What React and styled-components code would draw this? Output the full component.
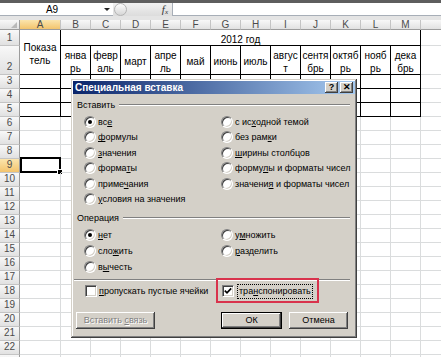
import styled, { createGlobalStyle, css } from 'styled-components';

const GlobalStyle = createGlobalStyle`
  html, body {
    margin: 0;
    padding: 0;
    background: #fff;
    overflow: hidden;
  }
  body {
    font-family: "Liberation Sans", Arial, sans-serif;
    color: #000;
  }
`;

const Screen = styled.div`
  width: 441px;
  height: 357px;
  position: relative;
  overflow: hidden;
  background: #fff;
`;

/* ---------- formula bar ---------- */

const FormulaBar = styled.div`
  display: flex;
  height: 13px;
  border-top: 3px solid #5e5e5e;
  border-bottom: 4px solid #e4e4e4;
  background: #e9e9e9;
`;

const NameBox = styled.div`
  width: 113px;
  box-sizing: border-box;
  background: #fff;
  border-bottom: 1px solid #a7aeb7;
  display: flex;
  align-items: center;
  font-size: 10px;
`;

const NameText = styled.span`
  width: 104px;
  text-align: center;
`;

const DropArrow = styled.span`
  width: 0;
  height: 0;
  border-left: 3px solid transparent;
  border-right: 3px solid transparent;
  border-top: 3px solid #222;
`;

const FxZone = styled.div`
  width: 59px;
  display: flex;
  align-items: center;
  background: linear-gradient(#f1f1f1, #dcdcdc);
`;

const Knob = styled.span`
  width: 11px;
  height: 11px;
  margin-left: 1px;
  border-radius: 50%;
  border: 1px solid #b3b3b3;
  background: linear-gradient(#fdfdfd, #d6d6d6);
`;

const Fx = styled.span`
  margin-left: auto;
  margin-right: 4px;
  font-family: "Liberation Serif", serif;
  font-style: italic;
  font-size: 11px;
  color: #333;

  sub {
    font-size: 7px;
    vertical-align: -1px;
  }
`;

const FormulaInput = styled.div`
  flex: 1;
  background: #fff;
  border-left: 1px solid #a7aeb7;
  border-bottom: 1px solid #a7aeb7;
`;

/* ---------- sheet ---------- */

const Sheet = styled.div`
  display: grid;
  grid-template-columns: 20px 41px repeat(12, 30px) 64px;
  grid-template-rows: 10px 16px 29px repeat(21, 14px);
  font-size: 10px;
`;

const headBg = (active) =>
  active ? 'linear-gradient(#fbe5ad, #f3c46d)' : 'linear-gradient(#f8f8f8, #e1e1e1)';

const Corner = styled.div`
  box-sizing: border-box;
  background: ${headBg(false)};
  border-right: 1px solid #9c9c9c;
  border-bottom: 1px solid #9c9c9c;
  display: flex;
  align-items: flex-end;
  justify-content: flex-end;
  padding: 0 2px 1px 0;

  &::after {
    content: '';
    width: 0;
    height: 0;
    border-left: 6px solid transparent;
    border-bottom: 6px solid #b9b9b9;
  }
`;

const ColHead = styled.div`
  box-sizing: border-box;
  display: flex;
  align-items: center;
  justify-content: center;
  background: ${(p) => headBg(p.$active)};
  border-right: 1px solid #c4c4c4;
  border-bottom: 1px solid #9c9c9c;
  color: #4b4b4b;
  font-size: 10px;
`;

const RowHead = styled.div`
  box-sizing: border-box;
  display: flex;
  align-items: flex-end;
  justify-content: center;
  padding-bottom: 1px;
  line-height: 12px;
  background: ${(p) => headBg(p.$active)};
  border-right: 1px solid #9c9c9c;
  border-bottom: 1px solid #c4c4c4;
  color: #4b4b4b;
  font-size: 10px;
`;

const Cell = styled.div`
  box-sizing: border-box;
  position: relative;
  display: flex;
  align-items: center;
  justify-content: center;
  text-align: center;
  padding-top: 3px;
  line-height: 13px;
  border-right: 1px solid ${(p) => (p.$table ? '#000' : '#dadcdd')};
  border-bottom: 1px solid ${(p) => (p.$table ? '#000' : '#dadcdd')};
  grid-column: ${(p) => (p.$colSpan ? `span ${p.$colSpan}` : 'auto')};
  grid-row: ${(p) => (p.$rowSpan ? `span ${p.$rowSpan}` : 'auto')};

  ${(p) =>
    p.$selected &&
    css`
      &::before {
        content: '';
        position: absolute;
        left: 0;
        top: -2px;
        right: -1px;
        bottom: -1px;
        border: 2px solid #000;
      }
      &::after {
        content: '';
        position: absolute;
        right: -3px;
        bottom: -3px;
        width: 4px;
        height: 4px;
        background: #000;
        border: 1px solid #fff;
      }
    `}
`;

/* ---------- dialog ---------- */

const Dialog = styled.div`
  position: absolute;
  left: 71px;
  top: 79px;
  width: 286px;
  height: 259px;
  box-sizing: border-box;
  padding: 2px;
  background: #d4d0c8;
  box-shadow: inset -1px -1px #404040, inset 1px 1px #d4d0c8, inset -2px -2px #808080,
    inset 2px 2px #fff;
  font-size: 9px;
  display: flex;
  flex-direction: column;
`;

const TitleBar = styled.div`
  height: 13px;
  display: flex;
  align-items: center;
  gap: 2px;
  padding: 0 2px 0 2px;
  background: linear-gradient(90deg, #0a246a, #a6caf0);
  color: #fff;
  font-weight: bold;
  font-size: 10px;
`;

const Title = styled.span`
  flex: 1;
  white-space: nowrap;
`;

const CaptionButton = styled.span`
  width: 13px;
  height: 11px;
  box-sizing: border-box;
  display: flex;
  align-items: center;
  justify-content: center;
  background: #d4d0c8;
  color: #000;
  font-size: 9px;
  font-weight: bold;
  line-height: 1;
  box-shadow: inset -1px -1px #404040, inset 1px 1px #fff, inset -2px -2px #808080;
`;

const GroupHead = styled.div`
  display: flex;
  align-items: center;
  height: 12px;
  margin: ${(p) => p.$mt}px 5px 0 4px;

  &::after {
    content: '';
    flex: 1;
    margin-left: 4px;
    border-top: 1px solid #808080;
    border-bottom: 1px solid #fff;
  }
`;

const OptionGrid = styled.div`
  display: grid;
  grid-template-columns: 137px 1fr;
  grid-auto-flow: column;
  grid-template-rows: repeat(${(p) => p.$rows}, ${(p) => p.$rowH}px);
  padding-left: 11px;
  margin-top: ${(p) => p.$mt}px;
`;

const Option = styled.label`
  display: flex;
  align-items: center;
  gap: 2px;
  white-space: nowrap;
`;

const RadioMark = styled.span`
  flex: none;
  position: relative;
  width: 12px;
  height: 12px;
  box-sizing: border-box;
  border-radius: 50%;
  background: #fff;
  border: 1px solid;
  border-color: #808080 #fff #fff #808080;
  box-shadow: inset 1px 1px #404040, inset -1px -1px #d4d0c8;

  ${(p) =>
    p.$checked &&
    css`
      &::after {
        content: '';
        position: absolute;
        left: 3px;
        top: 3px;
        width: 4px;
        height: 4px;
        border-radius: 50%;
        background: #000;
      }
    `}
`;

const Separator = styled.div`
  margin: 4px 5px 0 1px;
  border-top: 1px solid #808080;
  border-bottom: 1px solid #fff;
`;

const CheckRow = styled.div`
  display: grid;
  grid-template-columns: 137px 1fr;
  height: 15px;
  margin-top: 3px;
  padding-left: 12px;
`;

const CheckBox = styled.span`
  flex: none;
  width: 12px;
  height: 12px;
  box-sizing: border-box;
  background: #fff;
  border: 1px solid;
  border-color: #808080 #fff #fff #808080;
  box-shadow: inset 1px 1px #404040, inset -1px -1px #d4d0c8;
  display: flex;
  align-items: center;
  justify-content: center;
`;

const FocusText = styled.span`
  border: 1px dotted #000;
  padding: 1px 1px 2px;
  margin-left: 1px;
`;

const Annotation = styled.div`
  position: absolute;
  left: 145px;
  top: 199px;
  width: 103px;
  height: 25px;
  box-sizing: border-box;
  border: 2px solid #d9334d;
  pointer-events: none;
`;

const ButtonRow = styled.div`
  display: flex;
  margin-top: 13px;
  padding-left: 3px;
`;

const Button = styled.button`
  height: 17px;
  width: ${(p) => p.$w}px;
  margin-left: ${(p) => p.$ml || 0}px;
  padding: 0;
  border: none;
  background: #d4d0c8;
  font-family: inherit;
  font-size: 9px;
  color: ${(p) => (p.disabled ? '#808080' : '#000')};
  text-shadow: ${(p) => (p.disabled ? '1px 1px #fff' : 'none')};
  box-shadow: ${(p) =>
    p.$default
      ? 'inset 0 0 0 1px #000, inset -2px -2px #404040, inset 2px 2px #fff, inset -3px -3px #808080'
      : 'inset -1px -1px #404040, inset 1px 1px #fff, inset -2px -2px #808080'};
`;

/* ---------- data ---------- */

const COLS = ['A', 'B', 'C', 'D', 'E', 'F', 'G', 'H', 'I', 'J', 'K', 'L', 'M', 'N'];

const MONTHS = [
  ['янва', 'рь'],
  ['февр', 'аль'],
  ['март'],
  ['апре', 'ль'],
  ['май'],
  ['июнь'],
  ['июль'],
  ['авгус', 'т'],
  ['сентя', 'брь'],
  ['октяб', 'рь'],
  ['нояб', 'рь'],
  ['дека', 'брь'],
];

const PASTE = [
  { text: 'все', key: 2, checked: true },
  { text: 'формулы', key: 0 },
  { text: 'значения', key: 0 },
  { text: 'форматы', key: 5 },
  { text: 'примечания', key: 5 },
  { text: 'условия на значения', key: 0 },
  { text: 'с исходной темой', key: 4 },
  { text: 'без рамки', key: 7 },
  { text: 'ширины столбцов', key: 0 },
  { text: 'формулы и форматы чисел', key: 5 },
  { text: 'значения и форматы чисел', key: 7 },
];

const OPERATIONS = [
  { text: 'нет', key: 0, checked: true },
  { text: 'сложить', key: 3 },
  { text: 'вычесть', key: 1 },
  { text: 'умножить', key: 1 },
  { text: 'разделить', key: 0 },
];

function Accel({ text, at }) {
  return (
    <span>
      {text.slice(0, at)}
      <u>{text[at]}</u>
      {text.slice(at + 1)}
    </span>
  );
}

function Lines({ lines }) {
  return (
    <span>
      {lines.map((l, i) => (
        <span key={i}>
          {i > 0 && <br />}
          {l}
        </span>
      ))}
    </span>
  );
}

function SheetGrid() {
  const rows = [];
  for (let r = 3; r <= 23; r++) {
    rows.push(
      <RowHead key={`h${r}`} $active={r === 9}>
        {r < 23 ? r : ''}
      </RowHead>
    );
    COLS.forEach((c, i) => {
      rows.push(
        <Cell key={`${c}${r}`} $table={r <= 5 && i < 13} $selected={r === 9 && c === 'A'} />
      );
    });
  }

  return (
    <Sheet>
      <Corner />
      {COLS.map((c) => (
        <ColHead key={c} $active={c === 'A'}>
          {c === 'N' ? '' : c}
        </ColHead>
      ))}

      <RowHead>1</RowHead>
      <Cell $table $rowSpan={2}>
        <Lines lines={['Показа', 'тель']} />
      </Cell>
      <Cell $table $colSpan={12}>
        2012 год
      </Cell>
      <Cell />

      <RowHead>2</RowHead>
      {MONTHS.map((m, i) => (
        <Cell key={i} $table>
          <Lines lines={m} />
        </Cell>
      ))}
      <Cell />

      {rows}
    </Sheet>
  );
}

function PasteSpecialDialog() {
  return (
    <Dialog>
      <TitleBar>
        <Title>Специальная вставка</Title>
        <CaptionButton>?</CaptionButton>
        <CaptionButton>✕</CaptionButton>
      </TitleBar>

      <GroupHead $mt={5}>Вставить</GroupHead>
      <OptionGrid $rows={6} $rowH={15.4} $mt={3.3}>
        {PASTE.map((o) => (
          <Option key={o.text}>
            <RadioMark $checked={o.checked} />
            <Accel text={o.text} at={o.key} />
          </Option>
        ))}
      </OptionGrid>

      <GroupHead $mt={5.3}>Операция</GroupHead>
      <OptionGrid $rows={3} $rowH={16} $mt={3}>
        {OPERATIONS.map((o) => (
          <Option key={o.text}>
            <RadioMark $checked={o.checked} />
            <Accel text={o.text} at={o.key} />
          </Option>
        ))}
      </OptionGrid>

      <Separator />

      <CheckRow>
        <Option>
          <CheckBox />
          <Accel text="пропускать пустые ячейки" at={0} />
        </Option>
        <Option>
          <CheckBox>
            <svg width="8" height="8" viewBox="0 0 8 8">
              <path d="M0.8 3.6 L3 5.8 L7.2 1.4" fill="none" stroke="#000" strokeWidth="1.7" />
            </svg>
          </CheckBox>
          <FocusText>
            <Accel text="транспонировать" at={3} />
          </FocusText>
        </Option>
      </CheckRow>

      <ButtonRow>
        <Button disabled $w={79}>
          Вставить <u>с</u>вязь
        </Button>
        <Button $default $w={61} $ml={66}>
          ОК
        </Button>
        <Button $w={59} $ml={7}>
          Отмена
        </Button>
      </ButtonRow>

      <Annotation />
    </Dialog>
  );
}

export default function App() {
  return (
    <Screen>
      <GlobalStyle />
      <FormulaBar>
        <NameBox>
          <NameText>A9</NameText>
          <DropArrow />
        </NameBox>
        <FxZone>
          <Knob />
          <Fx>
            f<sub>x</sub>
          </Fx>
        </FxZone>
        <FormulaInput />
      </FormulaBar>
      <SheetGrid />
      <PasteSpecialDialog />
    </Screen>
  );
}
